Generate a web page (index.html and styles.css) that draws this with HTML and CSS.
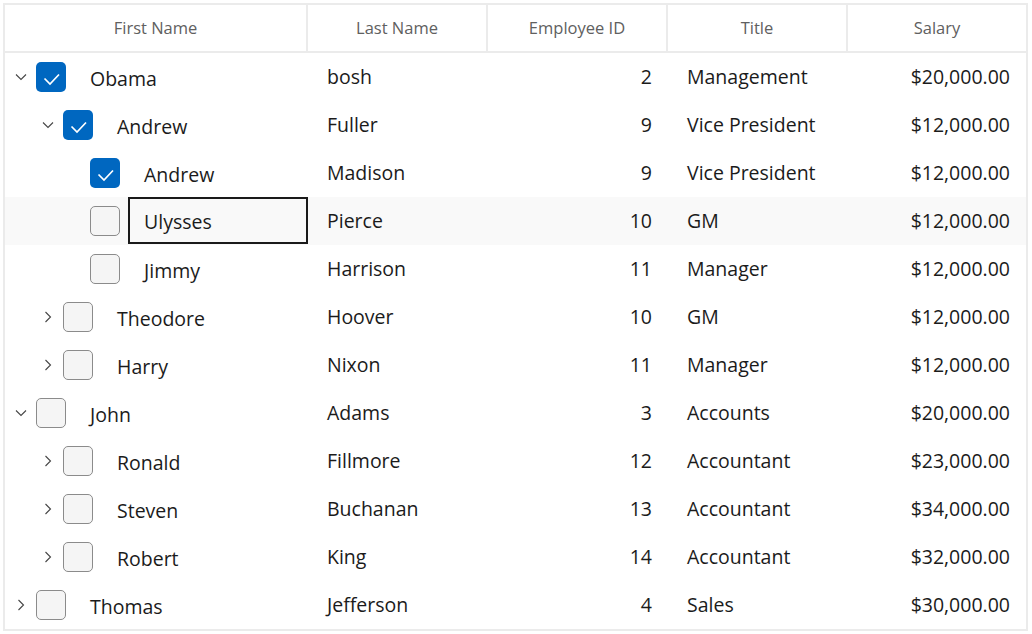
FILE: index.html
```html
<!DOCTYPE html>
<html lang="en">
<head>
    <meta charset="UTF-8">
    <title>Employees</title>
    <link rel="stylesheet" href="styles.css">
</head>
<body>
    <div class="grid">
        <div class="header">
            <div class="hcell">First Name</div>
            <div class="hcell">Last Name</div>
            <div class="hcell">Employee ID</div>
            <div class="hcell">Title</div>
            <div class="hcell last">Salary</div>
        </div>

        <div class="row">
            <div class="tree lvl0"><span class="chev down"><svg width="12" height="8" viewBox="0 0 12 8"><path d="M1 1.5 L6 6.5 L11 1.5"/></svg></span><span class="box on"><svg width="30" height="30" viewBox="0 0 30 30"><path d="M8.5 16.5 L14 22 L23 12.5"/></svg></span><span class="name">Obama</span></div>
            <div class="cell">bosh</div><div class="cell num">2</div><div class="cell">Management</div><div class="cell num">$20,000.00</div>
        </div>
        <div class="row">
            <div class="tree lvl1"><span class="chev down"><svg width="12" height="8" viewBox="0 0 12 8"><path d="M1 1.5 L6 6.5 L11 1.5"/></svg></span><span class="box on"><svg width="30" height="30" viewBox="0 0 30 30"><path d="M8.5 16.5 L14 22 L23 12.5"/></svg></span><span class="name">Andrew</span></div>
            <div class="cell">Fuller</div><div class="cell num">9</div><div class="cell">Vice President</div><div class="cell num">$12,000.00</div>
        </div>
        <div class="row">
            <div class="tree lvl2"><span class="chev"></span><span class="box on"><svg width="30" height="30" viewBox="0 0 30 30"><path d="M8.5 16.5 L14 22 L23 12.5"/></svg></span><span class="name">Andrew</span></div>
            <div class="cell">Madison</div><div class="cell num">9</div><div class="cell">Vice President</div><div class="cell num">$12,000.00</div>
        </div>
        <div class="row hover">
            <div class="tree lvl2"><span class="chev"></span><span class="box"></span><span class="name focus">Ulysses</span></div>
            <div class="cell">Pierce</div><div class="cell num">10</div><div class="cell">GM</div><div class="cell num">$12,000.00</div>
        </div>
        <div class="row">
            <div class="tree lvl2"><span class="chev"></span><span class="box"></span><span class="name">Jimmy</span></div>
            <div class="cell">Harrison</div><div class="cell num">11</div><div class="cell">Manager</div><div class="cell num">$12,000.00</div>
        </div>
        <div class="row">
            <div class="tree lvl1"><span class="chev"><svg width="8" height="12" viewBox="0 0 8 12"><path d="M1.5 1 L6.5 6 L1.5 11"/></svg></span><span class="box"></span><span class="name">Theodore</span></div>
            <div class="cell">Hoover</div><div class="cell num">10</div><div class="cell">GM</div><div class="cell num">$12,000.00</div>
        </div>
        <div class="row">
            <div class="tree lvl1"><span class="chev"><svg width="8" height="12" viewBox="0 0 8 12"><path d="M1.5 1 L6.5 6 L1.5 11"/></svg></span><span class="box"></span><span class="name">Harry</span></div>
            <div class="cell">Nixon</div><div class="cell num">11</div><div class="cell">Manager</div><div class="cell num">$12,000.00</div>
        </div>
        <div class="row">
            <div class="tree lvl0"><span class="chev down"><svg width="12" height="8" viewBox="0 0 12 8"><path d="M1 1.5 L6 6.5 L11 1.5"/></svg></span><span class="box"></span><span class="name">John</span></div>
            <div class="cell">Adams</div><div class="cell num">3</div><div class="cell">Accounts</div><div class="cell num">$20,000.00</div>
        </div>
        <div class="row">
            <div class="tree lvl1"><span class="chev"><svg width="8" height="12" viewBox="0 0 8 12"><path d="M1.5 1 L6.5 6 L1.5 11"/></svg></span><span class="box"></span><span class="name">Ronald</span></div>
            <div class="cell">Fillmore</div><div class="cell num">12</div><div class="cell">Accountant</div><div class="cell num">$23,000.00</div>
        </div>
        <div class="row">
            <div class="tree lvl1"><span class="chev"><svg width="8" height="12" viewBox="0 0 8 12"><path d="M1.5 1 L6.5 6 L1.5 11"/></svg></span><span class="box"></span><span class="name">Steven</span></div>
            <div class="cell">Buchanan</div><div class="cell num">13</div><div class="cell">Accountant</div><div class="cell num">$34,000.00</div>
        </div>
        <div class="row">
            <div class="tree lvl1"><span class="chev"><svg width="8" height="12" viewBox="0 0 8 12"><path d="M1.5 1 L6.5 6 L1.5 11"/></svg></span><span class="box"></span><span class="name">Robert</span></div>
            <div class="cell">King</div><div class="cell num">14</div><div class="cell">Accountant</div><div class="cell num">$32,000.00</div>
        </div>
        <div class="row">
            <div class="tree lvl0"><span class="chev"><svg width="8" height="12" viewBox="0 0 8 12"><path d="M1.5 1 L6.5 6 L1.5 11"/></svg></span><span class="box"></span><span class="name">Thomas</span></div>
            <div class="cell">Jefferson</div><div class="cell num">4</div><div class="cell">Sales</div><div class="cell num">$30,000.00</div>
        </div>
    </div>
</body>
</html>
```

FILE: styles.css
```css
body {
    margin: 0;
    padding: 3px;
    background: #ffffff;
    font-family: "Open Sans", "Noto Sans", sans-serif;
    color: #1b1b1b;
}

.grid {
    width: 1021px;
    border: 2px solid #ebebeb;
    background: #ffffff;
}

/* header */
.header {
    display: grid;
    grid-template-columns: 303px 180px 180px 180px 178px;
    height: 46px;
    border-bottom: 2px solid #ebebeb;
}

.hcell {
    display: flex;
    align-items: center;
    justify-content: center;
    padding-bottom: 2px;
    border-right: 2px solid #ebebeb;
    font-size: 16.5px;
    color: #606060;
}

.hcell.last {
    border-right: none;
}

/* rows */
.row {
    display: grid;
    grid-template-columns: 303px 180px 180px 180px 178px;
    height: 48px;
    font-size: 19.5px;
}

.row.hover {
    background: #f9f9f9;
}

.cell {
    display: flex;
    align-items: center;
    padding: 0 18px 2px 19px;
}

.cell.num {
    justify-content: flex-end;
    padding: 0 16px 2px 0;
}

/* tree column */
.tree {
    display: flex;
    align-items: center;
}

.tree.lvl1 { padding-left: 27px; }
.tree.lvl2 { padding-left: 54px; }

.chev {
    width: 31px;
    display: flex;
    justify-content: center;
    align-items: center;
}

.chev svg path {
    fill: none;
    stroke: #454545;
    stroke-width: 1.1;
}

.box {
    width: 28px;
    height: 28px;
    border: 1px solid #8b8b8b;
    border-radius: 5px;
    background: #f5f5f5;
    display: flex;
    flex-shrink: 0;
}

.box.on {
    width: 30px;
    height: 30px;
    border: none;
    background: #0067c0;
}

.box svg path {
    fill: none;
    stroke: #ffffff;
    stroke-width: 1.7;
}

.name {
    flex: 1;
    align-self: stretch;
    display: flex;
    align-items: center;
    margin-left: 8px;
    padding-left: 14px;
    padding-top: 2px;
    border: 2px solid transparent;
}

.name.focus {
    border-color: #1a1a1a;
    margin-bottom: 1px;
}
```
